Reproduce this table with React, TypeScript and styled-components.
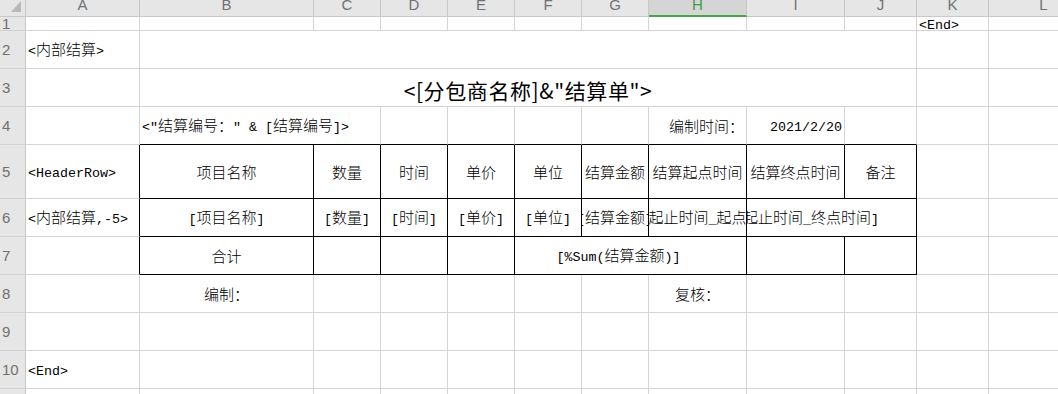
import React from "react";
import styled, { createGlobalStyle } from "styled-components";

const GRID = "#d4d4d4";
const INK = "#000000";
const HEAD_BG = "#e6e6e6";
const HEAD_LINE = "#c8c8c8";

const COLS = [26, 114, 174, 67, 67, 67, 67, 67, 98, 98, 72, 72, 110];
const ROWS = [17, 14, 38, 38, 38, 54, 38, 38, 38, 38, 38, 38];
const LETTERS = ["A", "B", "C", "D", "E", "F", "G", "H", "I", "J", "K", "L"];

const Global = createGlobalStyle`
  html, body { margin: 0; padding: 0; background: #ffffff; overflow: hidden; }
  body { font-family: "Noto Sans CJK SC", sans-serif; }
`;

const Sheet = styled.div`
  display: grid;
  grid-template-columns: ${COLS.map((c) => `${c}px`).join(" ")};
  grid-template-rows: ${ROWS.map((r) => `${r}px`).join(" ")};
  width: 1058px;
  height: 394px;
  overflow: hidden;
  background: #ffffff;
`;

const Corner = styled.div`
  box-sizing: border-box;
  background: ${HEAD_BG};
  border-right: 1px solid ${HEAD_LINE};
  border-bottom: 1px solid ${HEAD_LINE};
  display: flex;
  justify-content: flex-end;
  align-items: flex-end;
  padding: 0 4px 4px 0;
`;

const ColHead = styled.div<{ $active?: boolean }>`
  box-sizing: border-box;
  background: ${(p) => (p.$active ? "#d5d5d5" : HEAD_BG)};
  border-right: 1px solid ${HEAD_LINE};
  border-bottom: ${(p) => (p.$active ? "2px solid #45a845" : `1px solid ${HEAD_LINE}`)};
  display: flex;
  justify-content: center;
  align-items: flex-start;
  overflow: hidden;
  font-family: "Liberation Sans", Arial, sans-serif;
  font-size: 15px;
  line-height: 10px;
  color: ${(p) => (p.$active ? "#3c9a48" : "#6f7378")};
`;

const RowHead = styled.div`
  box-sizing: border-box;
  background: ${HEAD_BG};
  border-right: 1px solid ${HEAD_LINE};
  border-bottom: 1px solid #d2d2d2;
  display: flex;
  align-items: center;
  padding-left: 2px;
  overflow: hidden;
  font-family: "Liberation Sans", Arial, sans-serif;
  font-size: 15px;
  color: #74706a;
`;

type Align = "left" | "center" | "right";

const Cell = styled.div<{ $span?: number; $align?: Align; $r?: string; $b?: string; $pr?: number; $pad?: number }>`
  grid-column: span ${(p) => p.$span ?? 1};
  box-sizing: border-box;
  min-width: 0;
  border-right: 1px solid ${(p) => p.$r ?? GRID};
  border-bottom: 1px solid ${(p) => p.$b ?? GRID};
  display: flex;
  align-items: center;
  justify-content: ${(p) =>
    p.$align === "right" ? "flex-end" : p.$align === "center" ? "center" : "flex-start"};
  padding: 0 ${(p) => p.$pr ?? p.$pad ?? 2}px 0 ${(p) => p.$pad ?? 2}px;
  overflow: hidden;
  color: ${INK};
`;

const Anchor = styled.div<{ $w: number }>`
  flex: none;
  width: ${(p) => p.$w}px;
  display: flex;
  justify-content: center;
`;

const Line = styled.span`
  flex: none;
  white-space: pre;
  line-height: 18px;
`;

const Lat = styled.span`
  font-family: "Liberation Mono", "Courier New", monospace;
  font-size: 13.33px;
`;

const Han = styled.span`
  font-family: "Noto Sans CJK SC", sans-serif;
  font-size: 15px;
  font-weight: 300;
`;

const Title = styled.span`
  flex: none;
  white-space: pre;
  font-family: "Noto Sans CJK SC", sans-serif;
  font-size: 21px;
  font-weight: 400;
  line-height: 26px;
  letter-spacing: 0.6px;
  padding-top: 4px;
`;

const CJK_RE = /[\u2E80-\u9FFF\u3000-\u303F\uFF00-\uFFEF]/;

function splitRuns(s: string) {
  const out: { t: string; cjk: boolean }[] = [];
  for (const ch of s) {
    const c = CJK_RE.test(ch);
    const last = out[out.length - 1];
    if (last && last.cjk === c) last.t += ch;
    else out.push({ t: ch, cjk: c });
  }
  return out;
}

const Txt: React.FC<{ s: string }> = ({ s }) => (
  <Line>
    {splitRuns(s).map((r, i) => (r.cjk ? <Han key={i}>{r.t}</Han> : <Lat key={i}>{r.t}</Lat>))}
  </Line>
);

type C = {
  span?: number;
  text?: string;
  align?: Align;
  r?: string;
  b?: string;
  pr?: number;
  title?: boolean;
  anchor?: number;
};

const E: C = {};
const blank = (n: number): C[] => Array.from({ length: n }, () => ({}));
const box = (text = "", extra: Partial<C> = {}): C => ({ text, align: "center", r: INK, b: INK, ...extra });

const DATA: C[][] = [
  // 1
  [...blank(10), { text: "<End>" }, E],
  // 2
  [{ text: "<内部结算>" }, { span: 9 }, E, E],
  // 3
  [E, { span: 9, text: '<[分包商名称]&"结算单">', align: "center", title: true }, E, E],
  // 4
  [
    E,
    { span: 2, text: '<"结算编号：" & [结算编号]>', b: INK },
    { b: INK },
    { b: INK },
    { b: INK },
    { b: INK },
    { text: "编制时间：", align: "right", b: INK },
    { text: "2021/2/20", align: "right", b: INK },
    { b: INK },
    E,
    E,
  ],
  // 5
  [
    { text: "<HeaderRow>", r: INK },
    box("项目名称"),
    box("数量"),
    box("时间"),
    box("单价"),
    box("单位"),
    box("结算金额"),
    box("结算起点时间"),
    box("结算终点时间"),
    box("备注"),
    E,
    E,
  ],
  // 6
  [
    { text: "<内部结算,-5>", r: INK },
    box("[项目名称]"),
    box("[数量]"),
    box("[时间]"),
    box("[单价]"),
    box("[单位]"),
    box("[结算金额]"),
    box("[结算起止时间_起点时间]"),
    box("[结算起止时间_终点时间]", { span: 2, anchor: 90, align: "left" }),
    E,
    E,
  ],
  // 7
  [
    { r: INK },
    box("合计"),
    box(),
    box(),
    box(),
    box("[%Sum(结算金额)]", { span: 3, pr: 26 }),
    box(),
    box(),
    E,
    E,
  ],
  // 8
  [E, { text: "编制：", align: "center" }, E, E, E, E, E, { text: "复核：", align: "center" }, E, E, E, E],
  // 9
  blank(12),
  // 10
  [{ text: "<End>" }, ...blank(11)],
  // 11
  blank(12),
];

export default function App() {
  return (
    <>
      <Global />
      <Sheet>
        <Corner>
          <svg width="10" height="11" viewBox="0 0 10 11">
            <polygon points="10,0 10,11 0,11" fill="#b9b9b9" />
          </svg>
        </Corner>
        {LETTERS.map((l) => (
          <ColHead key={l} $active={l === "H"}>
            {l}
          </ColHead>
        ))}
        {DATA.map((row, ri) => (
          <React.Fragment key={ri}>
            <RowHead>{ri + 1}</RowHead>
            {row.map((c, ci) => (
              <Cell
                key={ci}
                $span={c.span}
                $align={c.align}
                $r={c.r}
                $b={c.b}
                $pr={c.pr}
                $pad={c.anchor ? 0 : undefined}
              >
                {c.title ? (
                  <Title>{c.text}</Title>
                ) : c.anchor ? (
                  <Anchor $w={c.anchor}>
                    <Txt s={c.text ?? ""} />
                  </Anchor>
                ) : c.text ? (
                  <Txt s={c.text} />
                ) : null}
              </Cell>
            ))}
          </React.Fragment>
        ))}
      </Sheet>
    </>
  );
}
